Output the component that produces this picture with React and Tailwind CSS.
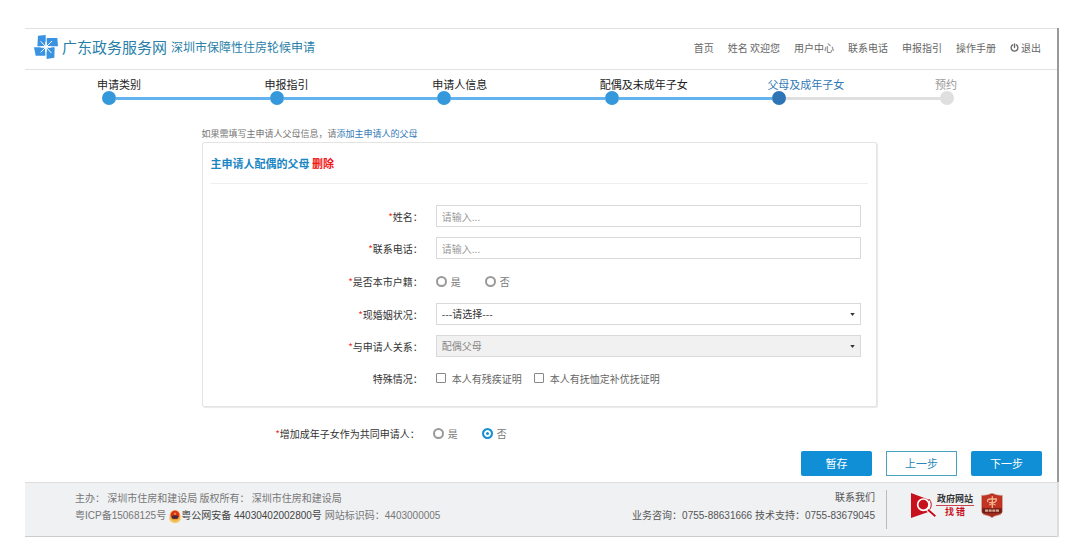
import { useState } from "react";

const steps = [
  { label: "申请类别", state: "done" },
  { label: "申报指引", state: "done" },
  { label: "申请人信息", state: "done" },
  { label: "配偶及未成年子女", state: "done" },
  { label: "父母及成年子女", state: "current" },
  { label: "预约", state: "todo" },
];

const labelColor = { done: "text-[#222]", current: "text-[#337ab7]", todo: "text-[#999]" };
const dotColor = { done: "bg-[#3498db]", current: "bg-[#2e75b6]", todo: "bg-[#dfdfdf]" };

const boxClass =
  "block h-[22px] w-full appearance-none border border-[#d9d9d9] px-[5px] text-[10px] leading-5 outline-none";

function SiteLogo() {
  return (
    <svg viewBox="0 0 72 72" className="size-6" aria-hidden="true">
      <g fill="#3a93e0">
        <path d="M12 2 L35 0 L35 34 L10 34 Z" />
        <path d="M38 9 L70 9 L72 34 L38 34 Z" />
        <path d="M37 37 L62 37 L61 68 L38 72 Z" />
        <path d="M0 37 L34 37 L34 62 L5 62 Z" />
      </g>
      <g stroke="#fff" strokeWidth="3">
        <path d="M20 19 L36 36 M54 18 L36 36 M52 54 L36 36 M20 52 L36 36" />
        <path d="M36 20 V52 M20 36 H52" strokeWidth="4" />
      </g>
    </svg>
  );
}

function PowerIcon() {
  return (
    <svg viewBox="0 0 16 16" className="size-[9px]" fill="none" stroke="currentColor" strokeWidth="2.4" strokeLinecap="round" aria-hidden="true">
      <path d="M8 1.5 V8 M4.6 3.4 A6 6 0 1 0 11.4 3.4" />
    </svg>
  );
}

function PoliceBadge() {
  return (
    <svg viewBox="0 0 36 40" className="h-[13px] w-3" aria-hidden="true">
      <path d="M2 18 L0 28 Q6 40 18 40 Q30 40 36 28 L34 18 Z" fill="#f3c35c" />
      <circle cx="18" cy="16" r="16" fill="#e9a23b" />
      <circle cx="18" cy="15" r="13" fill="#dc2f1c" />
      <path d="M7 19 Q18 14 29 19 L26 27 H10 Z" fill="#4a2a3a" />
      <path d="M18 6 L19.500 10 H23 L20 12 L21 16 L18 14 L15 16 L16 12 L13 10 H16.500 Z" fill="#f8a63d" />
    </svg>
  );
}

function ErrorReportLogo() {
  return (
    <span className="flex items-center">
      <svg viewBox="0 0 75 75" className="size-[25px]" aria-hidden="true">
        <path d="M0 0 L54 20 V56 L0 75 Z" fill="#c8101c" />
        <circle cx="37" cy="35" r="17" fill="#c8101c" stroke="#fff" strokeWidth="5" />
        <path d="M49 47 L72 70" stroke="#fff" strokeWidth="13" />
        <path d="M51 50 L73 70" stroke="#c8101c" strokeWidth="6" />
        <path d="M54 18 A25 25 0 0 1 56 50" fill="none" stroke="#c8101c" strokeWidth="3" />
      </svg>
      <span className="flex flex-col items-center text-[9px] font-bold leading-3">
        <span className="w-full whitespace-nowrap border-b border-[#c8474f] px-px text-center text-[#333]">政府网站</span>
        <span className="text-[#c8101c]">找 错</span>
      </span>
    </span>
  );
}

function PartyShield() {
  return (
    <svg viewBox="0 0 66 75" className="h-[25px] w-[22px]" aria-hidden="true">
      <path d="M2 7 Q18 8 33 1 Q48 8 64 7 V56 Q62 65 50 67 Q38 69 33 74 Q28 69 16 67 Q4 65 2 56 Z" fill="#a3291c" stroke="#d9a58c" strokeWidth="2" />
      <path d="M5 10 Q20 10 33 4 Q46 10 61 10 V44 H5 Z" fill="#c43424" />
      <path d="M4 46 H62 V60 H4 Z" fill="#6e2018" />
      <g fill="none" stroke="#f0b98c" strokeWidth="4">
        <path d="M34 10 V45 M20 27 Q18 17 30 18 H46 Q47 28 36 29 H24" />
        <path d="M24 36 L34 32 L44 36" strokeWidth="3" />
      </g>
      <path d="M12 53 H55" stroke="#d9a58c" strokeWidth="7" strokeDasharray="9 2" />
    </svg>
  );
}

function Steps() {
  return (
    <ol className="flex pl-[72px] pt-2">
      {steps.map((s, i) => {
        const last = i === steps.length - 1;
        const before = i === 0 ? "bg-transparent" : last ? "bg-[#dfdfdf]" : "bg-[#63b4ee]";
        const after = s.state === "done" ? "bg-[#63b4ee]" : "bg-[#dfdfdf]";
        return (
          <li key={s.label} className={last ? "w-[122px]" : "flex-1"}>
            <span className={`block whitespace-nowrap text-[11px] leading-[13px] ${labelColor[s.state]}`}>{s.label}</span>
            <span className="flex items-center">
              <span className={`h-[3px] w-[5px] ${before}`} />
              <span className={`size-[14px] rounded-full ${dotColor[s.state]}`} />
              {!last && <span className={`h-[3px] flex-1 ${after}`} />}
            </span>
          </li>
        );
      })}
    </ol>
  );
}

function FormRow({ id, label, required = true, tall, children }) {
  const title = (
    <>
      {required && <span className="text-[#e33]">*</span>}
      {label}：
    </>
  );
  return (
    <div
      className={`flex items-center ${tall ? "h-6" : "h-[22px]"}`}
      role={id ? undefined : "group"}
      aria-label={id ? undefined : label}
    >
      <div className="w-1/3 shrink-0 pr-1 text-right text-[10px] text-[#333]">
        {id ? <label htmlFor={id}>{title}</label> : <span>{title}</span>}
      </div>
      <div className="flex-1 pl-[9px] pr-[15px]">{children}</div>
    </div>
  );
}

function YesNo({ name, value, onChange }) {
  return (
    <div className="flex gap-6 text-[10px] text-[#777]">
      {["是", "否"].map((option) => (
        <label key={option} className="flex items-center gap-1">
          <input
            type="radio"
            name={name}
            checked={value === option}
            onChange={() => onChange(option)}
            className="size-[11px] appearance-none rounded-full border-2 border-[#999] bg-white checked:border-[#1590d2] checked:bg-[#1590d2] checked:shadow-[inset_0_0_0_2px_white]"
          />
          {option}
        </label>
      ))}
    </div>
  );
}

function Caret() {
  return (
    <svg viewBox="0 0 6 4" className="pointer-events-none absolute right-1.5 top-[10px] h-[3px] w-[5px]" aria-hidden="true">
      <path d="M0 0 H6 L3 4 Z" fill="#333" />
    </svg>
  );
}

function Check({ children }) {
  return (
    <label className="flex items-center gap-1.5">
      <input type="checkbox" className="size-[10px] appearance-none rounded-[1px] border border-[#888] bg-white checked:bg-[#1590d2]" />
      {children}
    </label>
  );
}

export default function App() {
  const [local, setLocal] = useState("");
  const [adult, setAdult] = useState("否");
  return (
    <div className="bg-white pl-[25px] pr-4 pt-7 font-['Noto_Sans_CJK_SC',sans-serif]">
      <div className="border-r-2 border-[#999]">
        <header className="flex h-[42px] items-center justify-between border-y border-[#e2e2e2] pb-1 pl-[9px] pr-4">
          <div className="flex items-center text-[#2a7fa8]">
            <SiteLogo />
            <h1 className="ml-1 flex items-center gap-1 text-[15px]">
              广东政务服务网 <span className="text-[12px]">深圳市保障性住房轮候申请</span>
            </h1>
          </div>
          <nav className="flex gap-[14px] text-[10px] text-[#666]">
            <a href="#home">首页</a>
            <a href="#me">姓名 欢迎您</a>
            <a href="#center">用户中心</a>
            <a href="#phone">联系电话</a>
            <a href="#guide">申报指引</a>
            <a href="#manual">操作手册</a>
            <a href="#logout" className="flex items-center gap-0.5"><PowerIcon />退出</a>
          </nav>
        </header>

        <Steps />

        <main className="pr-1">
          <div className="mx-auto max-w-[675px] pt-[22px]">
            <p className="pb-px text-[9px] leading-[14px] text-[#777]">
              如果需填写主申请人父母信息，请<a href="#add" className="text-[#337ab7]">添加主申请人的父母</a>
            </p>
            <section className="rounded-xs border border-[#e4e4e4] pb-[17px] shadow-[1px_1px_1px_#e8e8e8]">
              <h2 className="mx-2 border-b border-[#eee] pb-3 pt-3 text-[11px] font-bold leading-4 text-[#1a86c4]">
                主申请人配偶的父母 <button type="button" className="text-[#f01818]">删除</button>
              </h2>
              <div className="flex flex-col gap-[10px] pt-[21px]">
                <FormRow id="name" label="姓名">
                  <input id="name" type="text" placeholder="请输入..." className={`${boxClass} placeholder:text-[#999]`} />
                </FormRow>
                <FormRow id="tel" label="联系电话">
                  <input id="tel" type="text" placeholder="请输入..." className={`${boxClass} placeholder:text-[#999]`} />
                </FormRow>
                <FormRow label="是否本市户籍" tall>
                  <YesNo name="local" value={local} onChange={setLocal} />
                </FormRow>
                <FormRow id="marriage" label="现婚姻状况">
                  <div className="relative">
                    <select id="marriage" className={`${boxClass} bg-white text-[#333]`}>
                      <option>---请选择---</option>
                    </select>
                    <Caret />
                  </div>
                </FormRow>
                <FormRow id="relation" label="与申请人关系">
                  <div className="relative">
                    <select id="relation" disabled className={`${boxClass} bg-[#f1f1f1] text-[#888] opacity-100`}>
                      <option>配偶父母</option>
                    </select>
                    <Caret />
                  </div>
                </FormRow>
                <FormRow label="特殊情况" required={false}>
                  <div className="flex gap-3 text-[10px] text-[#666]">
                    <Check>本人有残疾证明</Check>
                    <Check>本人有抚恤定补优抚证明</Check>
                  </div>
                </FormRow>
              </div>
            </section>
            <div className="pr-2 pt-[14px]">
              <FormRow label="增加成年子女作为共同申请人" tall>
                <YesNo name="adult" value={adult} onChange={setAdult} />
              </FormRow>
            </div>
          </div>
          <div className="flex justify-end gap-[14px] pb-1.5 pr-[11px] pt-1.5 text-[11px]">
            <button type="button" className="h-[25px] w-[71px] rounded-xs bg-[#118fd6] text-white">暂存</button>
            <button type="button" className="h-[25px] w-[71px] border border-[#4aa3bd] bg-white text-[#2a86b8]">上一步</button>
            <button type="button" className="h-[25px] w-[71px] rounded-xs bg-[#118fd6] text-white">下一步</button>
          </div>
        </main>
      </div>

      <div className="border-r-2 border-[#ddd]">
        <footer className="flex h-[55px] border-b border-t border-b-[#ccc] border-t-[#ddd] bg-[#eff1f3] text-[10px] leading-[18px]">
          <div className="flex flex-1 justify-between pb-2 pl-[50px] pr-[11px] pt-1.5">
            <div className="text-[#777]">
              <p>主办： 深圳市住房和建设局 版权所有： 深圳市住房和建设局</p>
              <p className="flex items-center gap-[3px] font-['Liberation_Sans','Noto_Sans_CJK_SC',sans-serif]">
                <span>粤ICP备15068125号</span>
                <a href="#record" className="flex items-center text-[#444]"><PoliceBadge />粤公网安备 44030402002800号</a>
                <span>网站标识码：4403000005</span>
              </p>
            </div>
            <div className="text-right font-['Liberation_Sans','Noto_Sans_CJK_SC',sans-serif] text-[#555]">
              <p>联系我们</p>
              <p>业务咨询：0755-88631666 技术支持：0755-83679045</p>
            </div>
          </div>
          <div className="my-[7px] flex w-[171px] items-start gap-[7px] border-l border-[#bbb] pl-6 pt-[3px]">
            <ErrorReportLogo />
            <PartyShield />
          </div>
        </footer>
      </div>
    </div>
  );
}
